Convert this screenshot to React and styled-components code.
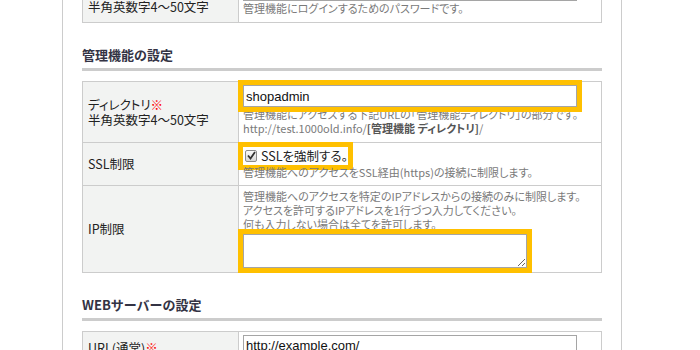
import React from "react";
import styled, { createGlobalStyle } from "styled-components";

const GlobalStyle = createGlobalStyle`
  html, body {
    margin: 0;
    padding: 0;
    background: #fff;
    overflow: hidden;
  }
  body {
    font-family: "Noto Sans CJK JP", "Liberation Sans", sans-serif;
    font-size: 12px;
    color: #222;
  }
`;

const Page = styled.div`
  box-sizing: border-box;
  width: 560px;
  min-height: 420px;
  margin: -25px 0 0 62px;
  padding: 0 19px;
  border-left: 1px solid #ccc;
  border-right: 1px solid #ccc;
`;

const Table = styled.div`
  border: 1px solid #ccc;
`;

const Row = styled.div`
  display: grid;
  grid-template-columns: 156px 1fr;
  & + & {
    border-top: 1px solid #ccc;
  }
`;

const Head = styled.div`
  box-sizing: border-box;
  display: flex;
  flex-direction: column;
  justify-content: center;
  padding: 0 5px;
  background: #f2f3f2;
  border-right: 1px solid #ccc;
  font-size: 12.5px;
  line-height: 15px;
  color: #222;
  font-feature-settings: "palt";
`;

const Cell = styled.div`
  padding: 3px 4px ${(p) => p.$pb ?? 7}px;
  min-width: 0;
`;

const Req = styled.span`
  color: #f00;
`;

const TextInput = styled.input`
  display: block;
  box-sizing: border-box;
  width: 334px;
  height: 22px;
  margin: 0;
  padding: 0 2px;
  border: 1px solid #a5a5a5;
  box-shadow: inset 0 0 0 1px #fff;
  font: 13px "Liberation Sans", Arial, sans-serif;
  color: #111;
  outline: ${(p) => (p.$hl ? "5px solid #ffc000" : "none")};
`;

const Area = styled.textarea`
  display: block;
  box-sizing: border-box;
  width: 284px;
  height: 34px;
  margin: 3px 0 0;
  border: 1px solid #a5a5a5;
  box-shadow: inset 0 0 0 1px #fff;
  outline: 5px solid #ffc000;
`;

const Desc = styled.div`
  font-size: 11px;
  line-height: 14px;
  color: #7a7a7a;
  white-space: nowrap;
  font-feature-settings: "palt";
`;

const Strong = styled.b`
  color: #555;
`;

const CheckLabel = styled.label`
  display: inline-flex;
  align-items: center;
  gap: 4px;
  height: 18px;
  padding-left: 2px;
  font-size: 12.5px;
  color: #222;
  font-feature-settings: "palt";
  outline: 5px solid #ffc000;
`;

const Box = styled.span`
  box-sizing: border-box;
  display: inline-flex;
  align-items: center;
  justify-content: center;
  width: 12px;
  height: 12px;
  border: 1px solid #8c8c8c;
  border-radius: 2px;
  background: linear-gradient(#fbfbfb, #d8d8d8);
`;

const SectionTitle = styled.h3`
  margin: 24px 0 10px;
  padding-bottom: 5px;
  border-bottom: 3px solid #ccc;
  font-size: 13px;
  line-height: 16px;
  font-weight: bold;
  color: #334;
`;

const CheckMark = () => (
  <svg width="9" height="9" viewBox="0 0 9 9">
    <path d="M1 4.5 L3.5 7.5 L8 1" fill="none" stroke="#333" strokeWidth="1.8" />
  </svg>
);

export default function App() {
  return (
    <Page>
      <GlobalStyle />
      <Table>
        <Row>
          <Head>
            <div>
              パスワード<Req>※</Req>
            </div>
            <div>半角英数字4〜50文字</div>
          </Head>
          <Cell>
            <TextInput type="password" defaultValue="" />
            <Desc>管理機能にログインするためのパスワードです。</Desc>
          </Cell>
        </Row>
      </Table>

      <SectionTitle>管理機能の設定</SectionTitle>
      <Table>
        <Row>
          <Head>
            <div>
              ディレクトリ<Req>※</Req>
            </div>
            <div>半角英数字4〜50文字</div>
          </Head>
          <Cell>
            <TextInput $hl defaultValue="shopadmin" />
            <Desc>管理機能にアクセスする下記URLの「管理機能ディレクトリ」の部分です。</Desc>
            <Desc>
              http://test.1000old.info/<Strong>[管理機能 ディレクトリ]</Strong>/
            </Desc>
          </Cell>
        </Row>
        <Row>
          <Head>SSL制限</Head>
          <Cell $pb={6}>
            <CheckLabel>
              <Box>
                <CheckMark />
              </Box>
              SSLを強制する。
            </CheckLabel>
            <Desc>管理機能へのアクセスをSSL経由(https)の接続に制限します。</Desc>
          </Cell>
        </Row>
        <Row>
          <Head>IP制限</Head>
          <Cell $pb={4}>
            <Desc>管理機能へのアクセスを特定のIPアドレスからの接続のみに制限します。</Desc>
            <Desc>アクセスを許可するIPアドレスを1行づつ入力してください。</Desc>
            <Desc>何も入力しない場合は全てを許可します。</Desc>
            <Area />
          </Cell>
        </Row>
      </Table>

      <SectionTitle>WEBサーバーの設定</SectionTitle>
      <Table>
        <Row>
          <Head>
            <div>
              URL(通常)<Req>※</Req>
            </div>
          </Head>
          <Cell>
            <TextInput defaultValue="http://example.com/" />
          </Cell>
        </Row>
        <Row>
          <Head>URL(SSL)</Head>
          <Cell>
            <TextInput defaultValue="https://example.com/" />
          </Cell>
        </Row>
      </Table>
    </Page>
  );
}
